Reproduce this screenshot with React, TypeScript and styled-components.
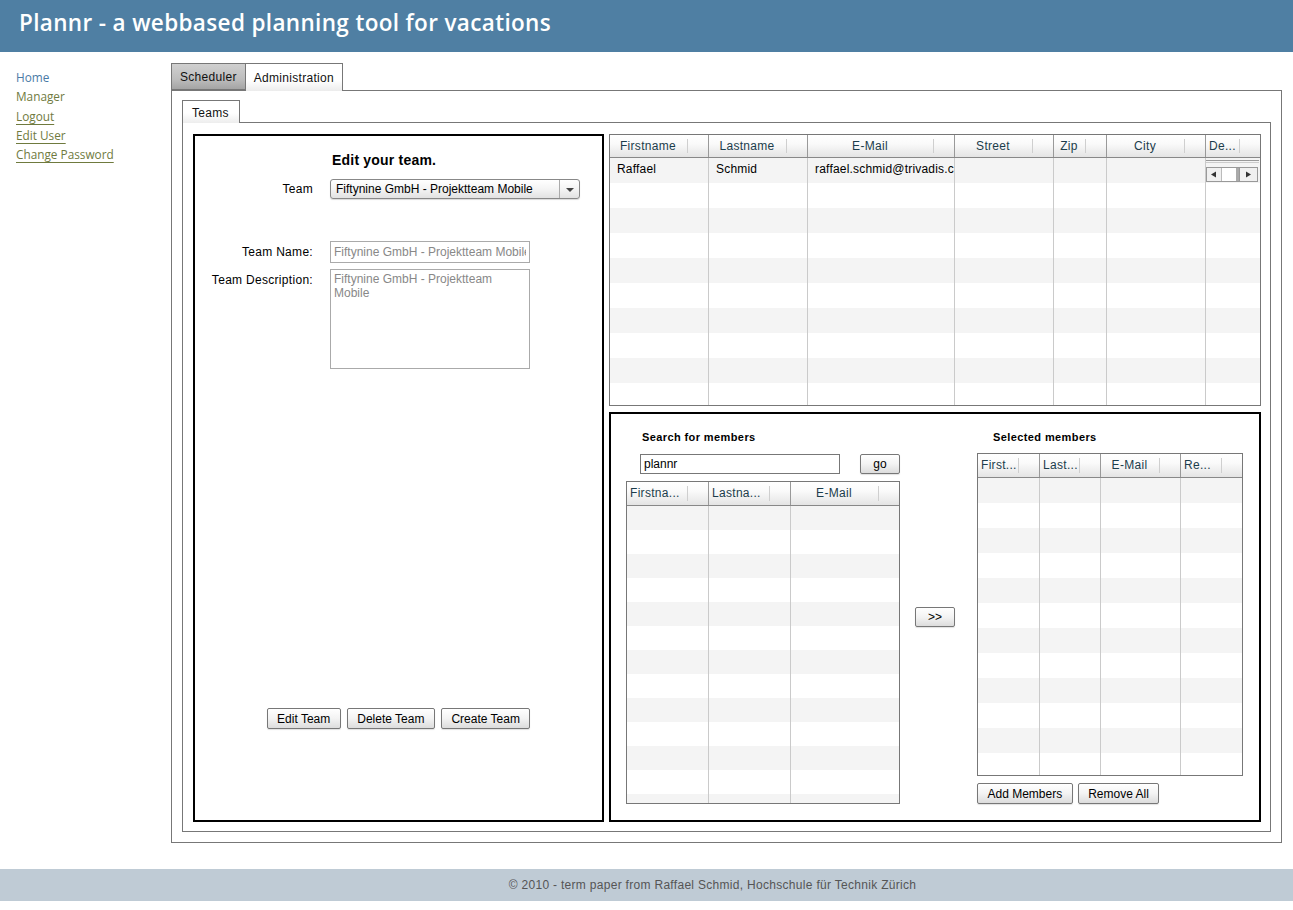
import React from "react"
import styled, { createGlobalStyle } from "styled-components"

const GlobalStyle = createGlobalStyle`
  body {
    margin: 0;
    background: #fff;
    font-family: "Liberation Sans", Arial, sans-serif;
    font-size: 12px;
    color: #000;
  }
  * { box-sizing: border-box; }
`

type Column = { label: string; align?: "left" | "center" }

type TableProps = {
  template: string
  columns: Column[]
  rows: React.ReactNode[][]
  rowCount: number
  rowHeight: number
  headerHeight: number
  height: number
}

function DataTable({ template, columns, rows, rowCount, rowHeight, headerHeight, height }: TableProps) {
  const body = Array.from({ length: rowCount }, (_, i) => rows[i] || columns.map(() => ""))
  return (
    <TableBox $height={height}>
      <HeaderRow $template={template} $height={headerHeight}>
        {columns.map((c, i) => (
          <HeaderCell key={i} $align={c.align || "center"}>
            <span>{c.label}</span>
          </HeaderCell>
        ))}
      </HeaderRow>
      {body.map((r, i) => (
        <BodyRow key={i} $template={template} $height={rowHeight}>
          {r.map((cell, j) => (
            <BodyCell key={j}>{cell}</BodyCell>
          ))}
        </BodyRow>
      ))}
    </TableBox>
  )
}

// little horizontal scrollbar that sits in the narrow last column
function MiniScroll() {
  return (
    <svg width="53" height="25" viewBox="0 0 53 25">
      <line x1="0" y1="2.5" x2="53" y2="2.5" stroke="#999" />
      <line x1="0" y1="4.5" x2="53" y2="4.5" stroke="#ccc" />
      <rect x="0.5" y="9.5" width="51" height="14" fill="#f0f0f0" stroke="#999" />
      <rect x="16" y="10" width="15" height="13" fill="#fff" />
      <rect x="30" y="10" width="3" height="13" fill="#aaa" />
      <line x1="33.5" y1="10" x2="33.5" y2="23" stroke="#999" />
      <line x1="15.5" y1="10" x2="15.5" y2="23" stroke="#bbb" />
      <polygon points="5,16.5 10,13.5 10,19.5" fill="#333" />
      <polygon points="40,13.5 45,16.5 40,19.5" fill="#333" />
    </svg>
  )
}

export default function App() {
  return (
    <>
      <GlobalStyle />
      <Header>
        <Title>Plannr - a webbased planning tool for vacations</Title>
      </Header>
      <Main>
        <Nav>
          <NavLink $tone="home">Home</NavLink>
          <NavLink $tone="plain">Manager</NavLink>
          <NavLink $tone="link">Logout</NavLink>
          <NavLink $tone="link">Edit User</NavLink>
          <NavLink $tone="link">Change Password</NavLink>
        </Nav>
        <Content>
          <TabBar>
            <Tab>Scheduler</Tab>
            <Tab $active>Administration</Tab>
          </TabBar>
          <TabPanel>
            <SubTabBar>
              <SubTab>Teams</SubTab>
            </SubTabBar>
            <SubPanel>
              <EditPanel>
                <FormRow $top={16}>
                  <span />
                  <FormTitle>Edit your team.</FormTitle>
                </FormRow>
                <FormRow $top={11}>
                  <Label>Team</Label>
                  <Select>
                    <SelectText>Fiftynine GmbH - Projektteam Mobile</SelectText>
                    <SelectArrow />
                  </Select>
                </FormRow>
                <FormRow $top={42}>
                  <Label>Team Name:</Label>
                  <TextInput readOnly value="Fiftynine GmbH - Projektteam Mobile" />
                </FormRow>
                <FormRow $top={6} $alignTop>
                  <Label $pad={4}>Team Description:</Label>
                  <TextArea readOnly value="Fiftynine GmbH - Projektteam Mobile" />
                </FormRow>
                <ButtonRow>
                  <Button>Edit Team</Button>
                  <Button>Delete Team</Button>
                  <Button>Create Team</Button>
                </ButtonRow>
              </EditPanel>
              <RightColumn>
                <DataTable
                  template="99px 99px 147px 99px 53px 99px 1fr"
                  columns={[
                    { label: "Firstname" },
                    { label: "Lastname" },
                    { label: "E-Mail" },
                    { label: "Street" },
                    { label: "Zip" },
                    { label: "City" },
                    { label: "De...", align: "left" },
                  ]}
                  rows={[["Raffael", "Schmid", "raffael.schmid@trivadis.c", "", "", "", <ScrollCell><MiniScroll /></ScrollCell>]]}
                  rowCount={10}
                  rowHeight={25}
                  headerHeight={23}
                  height={272}
                />
                <MembersPanel>
                  <SearchColumn>
                    <SectionTitle>Search for members</SectionTitle>
                    <SearchRow>
                      <SearchInput readOnly value="plannr" />
                      <Button $width={40} $height={20}>go</Button>
                    </SearchRow>
                    <TableSlot $top={7}>
                      <DataTable
                        template="82px 82px 1fr"
                        columns={[
                          { label: "Firstna...", align: "left" },
                          { label: "Lastna...", align: "left" },
                          { label: "E-Mail" },
                        ]}
                        rows={[]}
                        rowCount={14}
                        rowHeight={24}
                        headerHeight={24}
                        height={323}
                      />
                    </TableSlot>
                  </SearchColumn>
                  <MoveColumn>
                    <Button $width={40} $height={20}>&gt;&gt;</Button>
                  </MoveColumn>
                  <SelectedColumn>
                    <SectionTitle>Selected members</SectionTitle>
                    <TableSlot $top={9}>
                      <DataTable
                        template="62px 61px 80px 1fr"
                        columns={[
                          { label: "First...", align: "left" },
                          { label: "Last...", align: "left" },
                          { label: "E-Mail" },
                          { label: "Re...", align: "left" },
                        ]}
                        rows={[]}
                        rowCount={12}
                        rowHeight={25}
                        headerHeight={24}
                        height={323}
                      />
                    </TableSlot>
                    <MemberButtons>
                      <Button>Add Members</Button>
                      <Button>Remove All</Button>
                    </MemberButtons>
                  </SelectedColumn>
                </MembersPanel>
              </RightColumn>
            </SubPanel>
          </TabPanel>
        </Content>
      </Main>
      <Footer>© 2010 - term paper from Raffael Schmid, Hochschule für Technik Zürich</Footer>
    </>
  )
}

const Header = styled.div`
  height: 52px;
  background: #4f7fa3;
  padding-left: 19px;
  display: flex;
  align-items: center;
`

const Title = styled.h1`
  margin: 0 0 8px;
  font-family: "Open Sans", "DejaVu Sans", sans-serif;
  font-weight: 600;
  font-size: 22.5px;
  letter-spacing: 0.35px;
  color: #fff;
`

const Main = styled.div`
  display: flex;
  padding-top: 11px;
`

const Nav = styled.div`
  width: 171px;
  flex-shrink: 0;
  padding: 5px 0 0 16px;
  display: flex;
  flex-direction: column;
  align-items: flex-start;
`

const NavLink = styled.a<{ $tone: "home" | "plain" | "link" }>`
  font-family: "Open Sans", "DejaVu Sans", sans-serif;
  font-size: 11.8px;
  line-height: 19.3px;
  color: ${(p) => (p.$tone === "home" ? "#4a7aa6" : "#6f7a3e")};
  text-decoration: ${(p) => (p.$tone === "link" ? "underline" : "none")};
  text-decoration-thickness: 1px;
  text-underline-offset: 3px;
  cursor: pointer;
`

const Content = styled.div`
  width: 1111px;
  flex-shrink: 0;
`

const TabBar = styled.div`
  display: flex;
  height: 27px;
`

const Tab = styled.div<{ $active?: boolean }>`
  height: ${(p) => (p.$active ? "28px" : "27px")};
  padding: 1px 8px ${(p) => (p.$active ? "1px" : "0")};
  display: flex;
  align-items: center;
  font-size: 12px;
  letter-spacing: 0.3px;
  color: #111;
  border: 1px solid #777;
  border-bottom: ${(p) => (p.$active ? "none" : "1px solid #777")};
  border-left: ${(p) => (p.$active ? "none" : "1px solid #777")};
  background: ${(p) =>
    p.$active
      ? "linear-gradient(#ffffff, #ffffff 60%, #ececec)"
      : "linear-gradient(#d0d0d0, #bdbdbd 60%, #a4a4a4)"};
  position: relative;
  z-index: 1;
`

const TabPanel = styled.div`
  border: 1px solid #777;
  height: 753px;
  padding: 9px 10px 10px 10px;
`

const SubTabBar = styled.div`
  display: flex;
  height: 22px;
`

const SubTab = styled.div`
  height: 23px;
  padding: 1px 10px 0 9px;
  display: flex;
  align-items: center;
  font-size: 12px;
  letter-spacing: 0.3px;
  color: #111;
  border: 1px solid #777;
  border-bottom: none;
  background: linear-gradient(#ffffff, #ffffff 55%, #ededed);
  position: relative;
  z-index: 1;
`

const SubPanel = styled.div`
  border: 1px solid #777;
  height: 710px;
  padding: 11px 9px 9px 10px;
  display: flex;
  gap: 5px;
`

const EditPanel = styled.div`
  width: 411px;
  height: 688px;
  border: 2px solid #000;
  display: flex;
  flex-direction: column;
  padding-bottom: 91px;
`

const FormRow = styled.div<{ $top: number; $alignTop?: boolean }>`
  display: grid;
  grid-template-columns: 118px auto;
  column-gap: 17px;
  align-items: ${(p) => (p.$alignTop ? "start" : "center")};
  margin-top: ${(p) => p.$top}px;
`

const FormTitle = styled.div`
  font-size: 14px;
  font-weight: bold;
  line-height: 16px;
  letter-spacing: 0.2px;
  padding-left: 2px;
`

const Label = styled.div<{ $pad?: number }>`
  text-align: right;
  font-size: 12px;
  letter-spacing: 0.3px;
  padding-top: ${(p) => p.$pad || 0}px;
`

const Select = styled.div`
  width: 250px;
  height: 20px;
  border: 1px solid #888;
  border-radius: 3px;
  background: linear-gradient(#ffffff, #f4f4f4 50%, #e2e2e2);
  display: flex;
  box-shadow: 0 1px 1px rgba(0, 0, 0, 0.15);
`

const SelectText = styled.div`
  flex: 1;
  font-size: 12px;
  padding-left: 5px;
  line-height: 18px;
`

const SelectArrow = styled.div`
  width: 20px;
  border-left: 1px solid #aaa;
  display: flex;
  align-items: center;
  justify-content: center;
  &::after {
    content: "";
    border-left: 4px solid transparent;
    border-right: 4px solid transparent;
    border-top: 4px solid #444;
    margin-top: 1px;
  }
`

const TextInput = styled.input`
  width: 200px;
  height: 22px;
  border: 1px solid #aaa;
  padding: 0 3px;
  font-family: "Liberation Sans", Arial, sans-serif;
  font-size: 12px;
  color: #888;
  outline: none;
`

const TextArea = styled.textarea`
  width: 200px;
  height: 100px;
  border: 1px solid #aaa;
  padding: 2px 3px;
  font-family: "Liberation Sans", Arial, sans-serif;
  font-size: 12px;
  line-height: 14px;
  color: #888;
  resize: none;
  overflow: hidden;
  outline: none;
`

const ButtonRow = styled.div`
  margin-top: auto;
  display: flex;
  justify-content: center;
  gap: 6px;
`

const Button = styled.button<{ $width?: number; $height?: number }>`
  height: ${(p) => p.$height || 21}px;
  ${(p) => (p.$width ? `width: ${p.$width}px;` : "padding: 0 9.5px;")}
  border: 1px solid #777;
  border-radius: 2px;
  background: linear-gradient(#ffffff, #f3f3f3 50%, #dcdcdc);
  font-family: "Liberation Sans", Arial, sans-serif;
  font-size: 12px;
  color: #000;
  box-shadow: 0 1px 1px rgba(0, 0, 0, 0.12);
  cursor: pointer;
`

const RightColumn = styled.div`
  width: 652px;
  display: flex;
  flex-direction: column;
  gap: 6px;
`

const TableBox = styled.div<{ $height: number }>`
  height: ${(p) => p.$height}px;
  border: 1px solid #777;
  overflow: hidden;
  background: #fff;
`

const HeaderRow = styled.div<{ $template: string; $height: number }>`
  display: grid;
  grid-template-columns: ${(p) => p.$template};
  height: ${(p) => p.$height}px;
  border-bottom: 1px solid #888;
  background: linear-gradient(#ffffff, #fafafa 40%, #e4e4e4);
`

const HeaderCell = styled.div<{ $align: "left" | "center" }>`
  position: relative;
  border-right: 1px solid #999;
  display: flex;
  align-items: center;
  justify-content: ${(p) => (p.$align === "left" ? "flex-start" : "center")};
  padding: 0 22px 1px ${(p) => (p.$align === "left" ? 3 : 0)}px;
  font-size: 12px;
  letter-spacing: 0.3px;
  color: #1c3d4c;
  white-space: nowrap;
  overflow: hidden;
  &:last-child { border-right: none; }
  &::after {
    content: "";
    position: absolute;
    right: 20px;
    top: 4px;
    bottom: 4px;
    width: 1px;
    background: #cfcfcf;
  }
`

const BodyRow = styled.div<{ $template: string; $height: number }>`
  display: grid;
  grid-template-columns: ${(p) => p.$template};
  height: ${(p) => p.$height}px;
  &:nth-child(even) { background: #f4f4f4; }
`

const BodyCell = styled.div`
  border-right: 1px solid #cacaca;
  padding: 0 0 3px 7px;
  display: flex;
  align-items: center;
  font-size: 12px;
  letter-spacing: 0.2px;
  white-space: nowrap;
  overflow: hidden;
  &:last-child { border-right: none; }
`

const ScrollCell = styled.div`
  margin: 0 0 -3px -7px;
  display: flex;
  align-self: stretch;
`

const MembersPanel = styled.div`
  height: 410px;
  border: 2px solid #000;
  display: flex;
  padding: 17px 0 0 15px;
`

const SectionTitle = styled.div`
  font-size: 11px;
  font-weight: bold;
  line-height: 13px;
  letter-spacing: 0.4px;
  padding-left: 16px;
`

const SearchColumn = styled.div`
  width: 274px;
  display: flex;
  flex-direction: column;
`

const SearchRow = styled.div`
  display: flex;
  gap: 20px;
  margin: 10px 0 0 14px;
`

const SearchInput = styled.input`
  width: 200px;
  height: 20px;
  border: 1px solid #777;
  padding: 0 3px;
  font-family: "Liberation Sans", Arial, sans-serif;
  font-size: 12px;
  color: #000;
  outline: none;
`

const TableSlot = styled.div<{ $top: number }>`
  margin-top: ${(p) => p.$top}px;
`

const MoveColumn = styled.div`
  width: 77px;
  padding: 176px 0 0 15px;
`

const SelectedColumn = styled.div`
  width: 266px;
  display: flex;
  flex-direction: column;
`

const MemberButtons = styled.div`
  display: flex;
  gap: 5px;
  margin-top: 7px;
`

const Footer = styled.div`
  margin-top: 26px;
  height: 32px;
  background: #bfcbd5;
  display: flex;
  align-items: center;
  justify-content: center;
  padding-left: 132px;
  font-size: 12px;
  letter-spacing: 0.3px;
  color: #555;
`
